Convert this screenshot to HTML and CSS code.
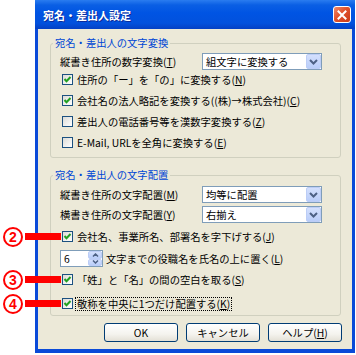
FILE: index.html
```html
<!DOCTYPE html>
<html lang="ja">
<head>
    <meta charset="UTF-8">
    <title>宛名・差出人設定</title>
    <link rel="stylesheet" href="styles.css">
</head>
<body>
    <div class="window">
        <!-- Title bar -->
        <div class="titlebar">
            <span class="title">宛名・差出人設定</span>
            <span class="close-button">
                <svg width="10" height="10" viewBox="0 0 10 10"><path d="M1.5 1.5 L8.5 8.5 M8.5 1.5 L1.5 8.5" stroke="#fff" stroke-width="2" stroke-linecap="square"/></svg>
            </span>
        </div>

        <div class="frame">
            <div class="content">
                <!-- Character conversion -->
                <fieldset class="group group-convert">
                    <legend>宛名・差出人の文字変換</legend>
                    <div class="group-body">
                        <div class="field-row">
                            <span>縦書き住所の数字変換(<u>T</u>)</span>
                            <div class="select">組文字に変換する<span class="arrow"><svg width="9" height="6" viewBox="0 0 9 6"><path d="M1 1 L4.5 4.5 L8 1" fill="none" stroke="#4d6185" stroke-width="2"/></svg></span></div>
                        </div>
                        <div class="check-row first">
                            <span class="checkbox"><svg class="tick" width="9" height="9" viewBox="0 0 9 9"><path d="M1.5 4 L3.5 6.2 L7.5 2" fill="none" stroke="#21a121" stroke-width="2"/></svg></span>
                            <span>住所の「ー」を「の」に変換する(<u>N</u>)</span>
                        </div>
                        <div class="check-row">
                            <span class="checkbox"><svg class="tick" width="9" height="9" viewBox="0 0 9 9"><path d="M1.5 4 L3.5 6.2 L7.5 2" fill="none" stroke="#21a121" stroke-width="2"/></svg></span>
                            <span>会社名の法人略記を変換する((株)→株式会社)(<u>C</u>)</span>
                        </div>
                        <div class="check-row">
                            <span class="checkbox"></span>
                            <span>差出人の電話番号等を漢数字変換する(<u>Z</u>)</span>
                        </div>
                        <div class="check-row">
                            <span class="checkbox"></span>
                            <span>E-Mail, URLを全角に変換する(<u>E</u>)</span>
                        </div>
                    </div>
                </fieldset>

                <!-- Character layout -->
                <fieldset class="group group-layout">
                    <legend>宛名・差出人の文字配置</legend>
                    <div class="group-body">
                        <div class="field-row">
                            <span>縦書き住所の文字配置(<u>M</u>)</span>
                            <div class="select">均等に配置<span class="arrow"><svg width="9" height="6" viewBox="0 0 9 6"><path d="M1 1 L4.5 4.5 L8 1" fill="none" stroke="#4d6185" stroke-width="2"/></svg></span></div>
                        </div>
                        <div class="field-row second">
                            <span>横書き住所の文字配置(<u>Y</u>)</span>
                            <div class="select">右揃え<span class="arrow"><svg width="9" height="6" viewBox="0 0 9 6"><path d="M1 1 L4.5 4.5 L8 1" fill="none" stroke="#4d6185" stroke-width="2"/></svg></span></div>
                        </div>
                        <div class="check-row indent">
                            <div class="marker"><span class="marker-num">2</span><span class="marker-bar"></span></div>
                            <span class="checkbox"><svg class="tick" width="9" height="9" viewBox="0 0 9 9"><path d="M1.5 4 L3.5 6.2 L7.5 2" fill="none" stroke="#21a121" stroke-width="2"/></svg></span>
                            <span>会社名、事業所名、部署名を字下げする(<u>J</u>)</span>
                        </div>
                        <div class="spin-row">
                            <div class="spin">
                                <span>6</span>
                                <span class="spin-buttons">
                                    <span class="spin-btn"><svg width="7" height="4" viewBox="0 0 7 4"><path d="M1 3.5 L3.5 1 L6 3.5" fill="none" stroke="#4d6185" stroke-width="1.5"/></svg></span>
                                    <span class="spin-btn"><svg width="7" height="4" viewBox="0 0 7 4"><path d="M1 0.5 L3.5 3 L6 0.5" fill="none" stroke="#4d6185" stroke-width="1.5"/></svg></span>
                                </span>
                            </div>
                            <span>文字までの役職名を氏名の上に置く(<u>L</u>)</span>
                        </div>
                        <div class="check-row space">
                            <div class="marker"><span class="marker-num">3</span><span class="marker-bar"></span></div>
                            <span class="checkbox"><svg class="tick" width="9" height="9" viewBox="0 0 9 9"><path d="M1.5 4 L3.5 6.2 L7.5 2" fill="none" stroke="#21a121" stroke-width="2"/></svg></span>
                            <span>「姓」と「名」の間の空白を取る(<u>S</u>)</span>
                        </div>
                        <div class="check-row honorific">
                            <div class="marker"><span class="marker-num">4</span><span class="marker-bar"></span></div>
                            <span class="checkbox"><svg class="tick" width="9" height="9" viewBox="0 0 9 9"><path d="M1.5 4 L3.5 6.2 L7.5 2" fill="none" stroke="#21a121" stroke-width="2"/></svg></span>
                            <span class="focused">敬称を中央に1つだけ配置する(<u>K</u>)</span>
                        </div>
                    </div>
                </fieldset>

                <!-- Dialog buttons -->
                <div class="buttons">
                    <button class="button">OK</button>
                    <button class="button">キャンセル</button>
                    <button class="button">ヘルプ(<u>H</u>)</button>
                </div>
            </div>
        </div>
    </div>
</body>
</html>
```

FILE: styles.css
```css
body {
    margin: 0;
    background-color: #fff;
    font-family: "Noto Sans CJK JP", sans-serif;
    font-size: 10.3px;
    color: #000;
}

u {
    text-decoration-thickness: 1px;
    text-underline-offset: 1px;
}

.window {
    margin-left: 35px;
    width: 320px;
}

/* Title bar, XP blue */
.titlebar {
    height: 29px;
    display: flex;
    align-items: center;
    justify-content: space-between;
    padding: 0 4px 0 8px;
    background: linear-gradient(#2a7cf0 0, #0a5fe4 5px, #0054e3 45%, #0251dd 80%, #0440c4 100%);
}

.title {
    color: #fff;
    font-size: 11px;
    font-weight: 700;
    text-shadow: 1px 1px 0 #0a2a9a;
}

.close-button {
    width: 18px;
    height: 17px;
    box-sizing: border-box;
    border: 1px solid #fff;
    border-radius: 3px;
    background: linear-gradient(135deg, #ee8a6c 0, #e1512c 45%, #c93a18 100%);
    display: flex;
    align-items: center;
    justify-content: center;
}

.frame {
    border: 3px solid #0a4ad8;
    border-top: 0;
    border-bottom-width: 4px;
}

.content {
    background-color: #ece9d8;
    height: 320px;
    box-sizing: border-box;
    padding: 7px 10px 7px 12px;
    display: flex;
    flex-direction: column;
}

/* Group boxes */
.group {
    margin: 0 1px 0 0;
    border: 1px solid #d0d0bf;
    border-radius: 3px;
    padding: 3px 8px 6px 9px;
    min-width: 0;
}

.group legend {
    color: #0046d5;
    line-height: 14px;
    padding: 0 2px;
    margin-left: -7px;
}

.group-layout {
    margin-top: 10px;
    padding-top: 4px;
    padding-bottom: 3px;
}

.group-body {
    display: flex;
    flex-direction: column;
}

.field-row {
    display: grid;
    grid-template-columns: 142px 120px;
    align-items: center;
    height: 17px;
}

.field-row.second {
    margin-top: 3px;
}

.select {
    height: 17px;
    box-sizing: border-box;
    border: 1px solid #7f9db9;
    background-color: #fff;
    padding-left: 3px;
    display: flex;
    align-items: center;
    justify-content: space-between;
}

.arrow {
    width: 15px;
    height: 15px;
    box-sizing: border-box;
    border: 1px solid #bccdf6;
    border-radius: 2px;
    background: linear-gradient(#d4e0fd, #b9cdf9);
    display: flex;
    align-items: center;
    justify-content: center;
}

/* Checkboxes */
.check-row {
    position: relative;
    display: flex;
    align-items: center;
    height: 17px;
    margin-top: 4px;
    padding-left: 2px;
    gap: 4px;
}

.check-row.first {
    margin-top: 1px;
}

.check-row.indent {
    margin-top: 5px;
}

.check-row.space {
    margin-top: 4px;
}

.check-row.honorific {
    margin-top: 7px;
}

.checkbox {
    width: 11px;
    height: 11px;
    box-sizing: border-box;
    border: 1px solid #1c5180;
    background: linear-gradient(135deg, #dcdcd7, #fff);
    flex-shrink: 0;
    display: flex;
    align-items: center;
    justify-content: center;
}

.focused {
    outline: 1px dotted #000;
    line-height: 12px;
    padding: 0 1px;
    margin-left: -1px;
}

/* Spin box */
.spin-row {
    display: flex;
    align-items: center;
    gap: 3px;
    height: 17px;
    margin-top: 5px;
}

.spin {
    width: 43px;
    height: 17px;
    box-sizing: border-box;
    border: 1px solid #7f9db9;
    background-color: #fff;
    padding-left: 3px;
    display: flex;
    align-items: center;
    justify-content: space-between;
}

.spin-buttons {
    display: flex;
    flex-direction: column;
    width: 14px;
    height: 15px;
}

.spin-btn {
    flex: 1;
    border: 1px solid #bccdf6;
    border-radius: 2px;
    background: linear-gradient(#d4e0fd, #b9cdf9);
    display: flex;
    align-items: center;
    justify-content: center;
}

/* Red annotation markers */
.marker {
    position: absolute;
    left: -57px;
    top: 50%;
    transform: translateY(-50%);
    display: flex;
    align-items: center;
    gap: 2px;
}

.marker-num {
    width: 20px;
    height: 20px;
    box-sizing: border-box;
    border: 2px solid #f00;
    border-radius: 50%;
    color: #f00;
    font-family: "Liberation Sans", sans-serif;
    font-weight: 700;
    font-size: 14px;
    line-height: 16px;
    text-align: center;
}

.marker-bar {
    width: 36px;
    height: 7px;
    background-color: #f00;
}

/* Buttons */
.buttons {
    display: flex;
    justify-content: flex-end;
    gap: 8px;
    margin-top: 7px;
}

.button {
    width: 74px;
    height: 19px;
    border: 1px solid #003c74;
    border-radius: 3px;
    background: linear-gradient(#fff, #f4f3ee 60%, #e3e0d6);
    font-family: "Noto Sans CJK JP", sans-serif;
    font-size: 10.3px;
    color: #000;
    padding: 0;
}
```
